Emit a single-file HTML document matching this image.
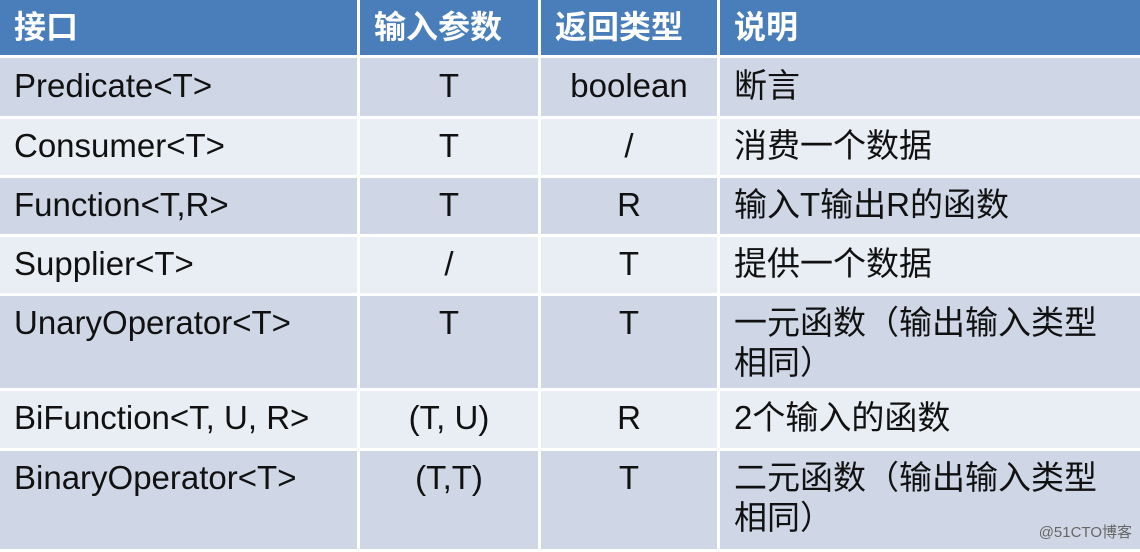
<!DOCTYPE html>
<html><head><meta charset="utf-8"><style>
body{margin:0;width:1140px;height:552px;background:#fff;overflow:hidden;position:relative;font-family:"Liberation Sans","Noto Sans CJK SC",sans-serif;color:#111}
.c{position:absolute;box-sizing:border-box;font-size:33px;line-height:40px;padding-left:14px;white-space:nowrap}
.h{background:#4a7ebb;color:#fff;font-weight:bold;font-size:32px;padding-top:7px}
.o{background:#cfd7e6}.e{background:#e9edf4}
.ctr{text-align:center;padding-left:0}
.w{position:absolute;right:8px;bottom:10px;font-size:15px;color:#666}
</style></head><body>
<div class="c h" style="left:0;top:0;width:357px;height:55px">接口</div>
<div class="c h" style="left:360px;top:0;width:178px;height:55px">输入参数</div>
<div class="c h" style="left:541px;top:0;width:176px;height:55px">返回类型</div>
<div class="c h" style="left:720px;top:0;width:420px;height:55px">说明</div>

<div class="c o" style="left:0;top:58px;width:357px;height:58px;padding-top:8px">Predicate&lt;T&gt;</div>
<div class="c o ctr" style="left:360px;top:58px;width:178px;height:58px;padding-top:8px">T</div>
<div class="c o ctr" style="left:541px;top:58px;width:176px;height:58px;padding-top:8px">boolean</div>
<div class="c o" style="left:720px;top:58px;width:420px;height:58px;padding-top:8px">断言</div>

<div class="c e" style="left:0;top:119px;width:357px;height:56px;padding-top:7px">Consumer&lt;T&gt;</div>
<div class="c e ctr" style="left:360px;top:119px;width:178px;height:56px;padding-top:7px">T</div>
<div class="c e ctr" style="left:541px;top:119px;width:176px;height:56px;padding-top:7px">/</div>
<div class="c e" style="left:720px;top:119px;width:420px;height:56px;padding-top:7px">消费一个数据</div>

<div class="c o" style="left:0;top:178px;width:357px;height:56px;padding-top:7px">Function&lt;T,R&gt;</div>
<div class="c o ctr" style="left:360px;top:178px;width:178px;height:56px;padding-top:7px">T</div>
<div class="c o ctr" style="left:541px;top:178px;width:176px;height:56px;padding-top:7px">R</div>
<div class="c o" style="left:720px;top:178px;width:420px;height:56px;padding-top:7px">输入T输出R的函数</div>

<div class="c e" style="left:0;top:237px;width:357px;height:56px;padding-top:7px">Supplier&lt;T&gt;</div>
<div class="c e ctr" style="left:360px;top:237px;width:178px;height:56px;padding-top:7px">/</div>
<div class="c e ctr" style="left:541px;top:237px;width:176px;height:56px;padding-top:7px">T</div>
<div class="c e" style="left:720px;top:237px;width:420px;height:56px;padding-top:7px">提供一个数据</div>

<div class="c o" style="left:0;top:296px;width:357px;height:92px;padding-top:7px">UnaryOperator&lt;T&gt;</div>
<div class="c o ctr" style="left:360px;top:296px;width:178px;height:92px;padding-top:7px">T</div>
<div class="c o ctr" style="left:541px;top:296px;width:176px;height:92px;padding-top:7px">T</div>
<div class="c o" style="left:720px;top:296px;width:420px;height:92px;padding-top:7px">一元函数（输出输入类型<br>相同）</div>

<div class="c e" style="left:0;top:391px;width:357px;height:57px;padding-top:7px">BiFunction&lt;T, U, R&gt;</div>
<div class="c e ctr" style="left:360px;top:391px;width:178px;height:57px;padding-top:7px">(T, U)</div>
<div class="c e ctr" style="left:541px;top:391px;width:176px;height:57px;padding-top:7px">R</div>
<div class="c e" style="left:720px;top:391px;width:420px;height:57px;padding-top:7px">2个输入的函数</div>

<div class="c o" style="left:0;top:451px;width:357px;height:98px;padding-top:7px">BinaryOperator&lt;T&gt;</div>
<div class="c o ctr" style="left:360px;top:451px;width:178px;height:98px;padding-top:7px">(T,T)</div>
<div class="c o ctr" style="left:541px;top:451px;width:176px;height:98px;padding-top:7px">T</div>
<div class="c o" style="left:720px;top:451px;width:420px;height:98px;padding-top:7px">二元函数（输出输入类型<br>相同）</div>
<div class="w">@51CTO博客</div>
</body></html>
